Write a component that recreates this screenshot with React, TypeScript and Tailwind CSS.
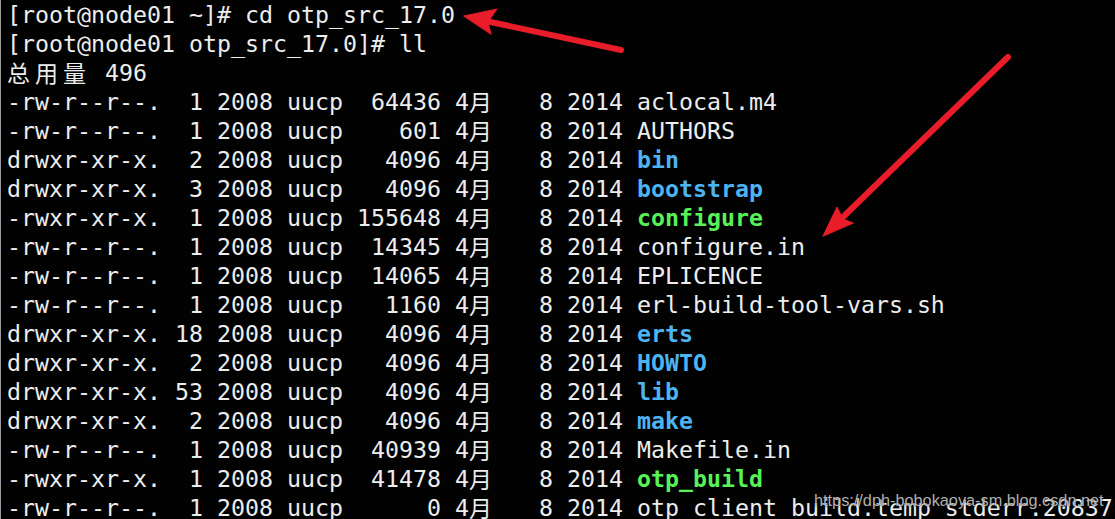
import React from 'react';

type Row = {
  perms: string;
  links: string;
  size: string;
  name: string;
  kind?: 'dir' | 'exec';
};

const rows: Row[] = [
  { perms: '-rw-r--r--.', links: ' 1', size: ' 64436', name: 'aclocal.m4' },
  { perms: '-rw-r--r--.', links: ' 1', size: '   601', name: 'AUTHORS' },
  { perms: 'drwxr-xr-x.', links: ' 2', size: '  4096', name: 'bin', kind: 'dir' },
  { perms: 'drwxr-xr-x.', links: ' 3', size: '  4096', name: 'bootstrap', kind: 'dir' },
  { perms: '-rwxr-xr-x.', links: ' 1', size: '155648', name: 'configure', kind: 'exec' },
  { perms: '-rw-r--r--.', links: ' 1', size: ' 14345', name: 'configure.in' },
  { perms: '-rw-r--r--.', links: ' 1', size: ' 14065', name: 'EPLICENCE' },
  { perms: '-rw-r--r--.', links: ' 1', size: '  1160', name: 'erl-build-tool-vars.sh' },
  { perms: 'drwxr-xr-x.', links: '18', size: '  4096', name: 'erts', kind: 'dir' },
  { perms: 'drwxr-xr-x.', links: ' 2', size: '  4096', name: 'HOWTO', kind: 'dir' },
  { perms: 'drwxr-xr-x.', links: '53', size: '  4096', name: 'lib', kind: 'dir' },
  { perms: 'drwxr-xr-x.', links: ' 2', size: '  4096', name: 'make', kind: 'dir' },
  { perms: '-rw-r--r--.', links: ' 1', size: ' 40939', name: 'Makefile.in' },
  { perms: '-rwxr-xr-x.', links: ' 1', size: ' 41478', name: 'otp_build', kind: 'exec' },
  { perms: '-rw-r--r--.', links: ' 1', size: '     0', name: 'otp_client_build.temp_stderr.20837' },
];

// wide (CJK) chars take two terminal cells
const Wide: React.FC<{ ch: string }> = ({ ch }) => (
  <span className="inline-block w-[28px] align-top font-['Noto_Sans_CJK_SC',sans-serif] text-[23px] leading-[28px]">
    {ch}
  </span>
);

const Line: React.FC<{ children: React.ReactNode }> = ({ children }) => (
  <div className="h-[29px] whitespace-pre leading-[29px]">{children}</div>
);

const nameColor = (kind?: Row['kind']) => {
  if (kind === 'dir') return 'font-bold text-[#4db3f2]';
  if (kind === 'exec') return 'font-bold text-[#58f158]';
  return '';
};

export default function App() {
  return (
    <div className="relative h-[519px] w-[1115px] overflow-hidden border-l border-[#9a9a9a] bg-[#020202]">
      <div className="pl-[6px] font-['DejaVu_Sans_Mono',monospace] text-[23.25px] text-[#ededed]">
        <Line>[root@node01 ~]# cd otp_src_17.0</Line>
        <Line>[root@node01 otp_src_17.0]# ll</Line>
        <Line>
          <Wide ch="总" />
          <Wide ch="用" />
          <Wide ch="量" />
          {' 496'}
        </Line>
        {rows.map((r) => (
          <Line key={r.name}>
            {`${r.perms} ${r.links} 2008 uucp ${r.size} 4`}
            <Wide ch="月" />
            {'   8 2014 '}
            <span className={nameColor(r.kind)}>{r.name}</span>
          </Line>
        ))}
      </div>

      <svg className="pointer-events-none absolute left-0 top-0" width="1115" height="519" viewBox="0 0 1115 519">
        <g fill="#e81d29" stroke="#e81d29" strokeLinecap="round" strokeLinejoin="round">
          <line x1="620" y1="50" x2="485" y2="21" strokeWidth="6" />
          <polygon points="463,16 496,9 487,22 490,34" strokeWidth="1" />
          <line x1="1007" y1="57" x2="842" y2="217" strokeWidth="6" />
          <polygon points="822,236 836,207 842,219 852,223" strokeWidth="1" />
        </g>
      </svg>

      <div className="absolute left-[813px] top-[491px] font-['Liberation_Sans',Arial,sans-serif] text-[16.3px] leading-[18px] text-[#d2d2d2]/85 [text-shadow:0_0_2px_#000]">
        https://dph-bobokaoya-sm.blog.csdn.net
      </div>
    </div>
  );
}
